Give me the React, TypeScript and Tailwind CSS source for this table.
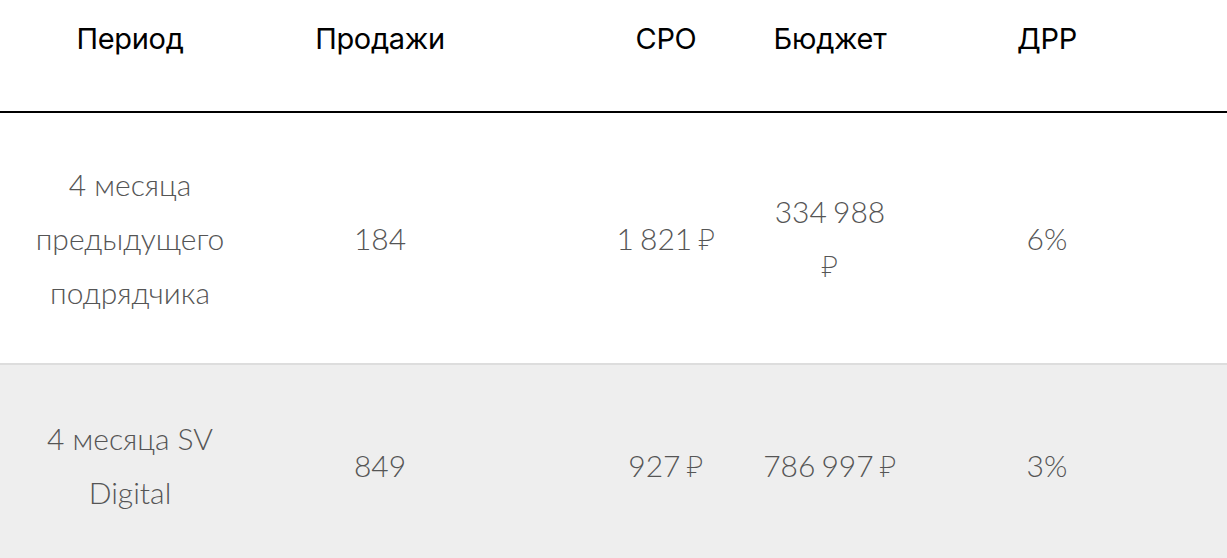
const rows = [
  {
    period: ["4 месяца", "предыдущего", "подрядчика"],
    sales: "184",
    cpo: "1 821",
    budget: ["334 988", ""],
    drr: "6%",
    bg: "bg-white",
  },
  {
    period: ["4 месяца SV", "Digital"],
    sales: "849",
    cpo: "927",
    budget: ["786 997"],
    drr: "3%",
    bg: "bg-[#eeeeee]",
  },
];

const grid = "grid grid-cols-[260px_240px_240px_180px_1fr]";

const Rub = () => (
  <span className="font-extralight" style={{ fontFamily: "'Noto Sans', sans-serif" }}>
    ₽
  </span>
);

const App = () => {
  return (
    <div className="w-[1227px] h-[558px] overflow-hidden bg-white">
      {/* Header */}
      <div
        className={`${grid} h-[113px] border-b-2 border-black text-[29px] font-normal tracking-[-0.3px] text-black pt-[17px]`}
        style={{ fontFamily: "Inter, 'Open Sans', sans-serif" }}
      >
        <div className="text-center">Период</div>
        <div className="text-center">Продажи</div>
        <div className="text-center pl-[92px]">CPO</div>
        <div className="text-center">Бюджет</div>
        <div className="text-center pr-[53px]">ДРР</div>
      </div>

      {rows.map((r, i) => (
        <div
          key={i}
          className={`${grid} ${r.bg} ${
            i === 0 ? "h-[252px] border-b-2 border-[#dddddd]" : "h-[200px]"
          } items-center text-[30px] font-light leading-[54px] text-[#555555]`}
          style={{ fontFamily: "Lato, 'Open Sans', sans-serif" }}
        >
          <div className="text-center">
            {r.period.map((l) => (
              <span key={l} className="block">
                {l}
              </span>
            ))}
          </div>
          <div className="text-center">{r.sales}</div>
          <div className="text-center pl-[92px] [word-spacing:-2px]">
            {r.cpo} <Rub />
          </div>
          <div className="text-center [word-spacing:-2px]">
            {r.budget.length > 1 ? (
              <>
                <span className="block">{r.budget[0]}</span>
                <span className="block">
                  <Rub />
                </span>
              </>
            ) : (
              <>
                {r.budget[0]} <Rub />
              </>
            )}
          </div>
          <div className="text-center pr-[53px]">{r.drr}</div>
        </div>
      ))}
    </div>
  );
};

export default App;
